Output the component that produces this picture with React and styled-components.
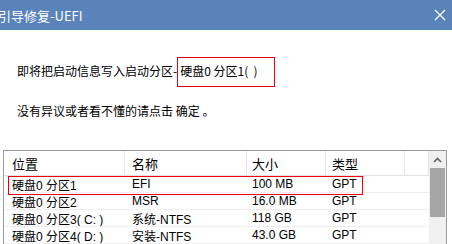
import styled, { createGlobalStyle } from "styled-components";

const GlobalStyle = createGlobalStyle`
  html, body {
    margin: 0;
    padding: 0;
    background: #fff;
  }
  body {
    width: 452px;
    height: 244px;
    overflow: hidden;
    font-family: "Liberation Sans", "Noto Sans CJK SC", sans-serif;
  }
`;

const Window = styled.div`
  width: 452px;
  height: 244px;
  overflow: hidden;
  display: flex;
  flex-direction: column;
`;

const TitleBar = styled.div`
  height: 30px;
  flex: none;
  background: #5a83ba;
  color: #fff;
  display: flex;
  align-items: center;
  justify-content: space-between;
  padding-right: 5px;
`;

const Title = styled.div`
  font-size: 13px;
  margin-left: -2px;
  font-family: "Noto Sans CJK SC", sans-serif;
`;

const CloseButton = styled.div`
  width: 12px;
  height: 12px;
  display: flex;
  margin-right: 1px;
`;

const Message = styled.div`
  padding-left: 17px;
  font-size: 12px;
  color: #000;
  font-family: "Noto Sans CJK SC", sans-serif;
  display: flex;
  flex-direction: column;
`;

const Line = styled.div`
  display: flex;
  align-items: center;
  height: ${(p) => p.$h}px;
  margin-top: ${(p) => p.$mt}px;
  white-space: pre;
`;

const Lead = styled.span`
  margin-bottom: 4px;
`;

const Highlight = styled.span`
  display: inline-flex;
  align-items: center;
  height: 30px;
  box-sizing: border-box;
  width: 98px;
  border: 1px solid #e8000b;
  padding: 0 0 4px 2px;
`;

const TablePanel = styled.div`
  margin: 30px 0 0 3px;
  width: 444px;
  flex: 1;
  box-sizing: border-box;
  border: 1px solid #9a9a9a;
  border-bottom: none;
  display: flex;
  overflow: hidden;
`;

const ListArea = styled.div`
  position: relative;
  width: 425px;
  font-size: 12px;
  font-family: "Liberation Sans", "Noto Sans CJK SC", sans-serif;
`;

const GridRow = styled.div`
  display: grid;
  grid-template-columns: 121px 122px 79px 79px 24px;
  height: ${(p) => (p.$header ? 24 : 16)}px;
  border-bottom: 1px solid ${(p) => (p.$header ? "#e3e3e3" : "#efefef")};
  font-size: ${(p) => (p.$header ? 13 : 12)}px;
`;

const Cell = styled.div`
  display: flex;
  align-items: center;
  padding-left: ${(p) => p.$pl ?? 7}px;
  border-right: ${(p) => (p.$sep ? "1px solid #e5e5e5" : "none")};
  white-space: pre;
  color: #000;
  overflow: hidden;
`;

const Mark = styled.div`
  position: absolute;
  left: 4px;
  top: 25px;
  width: 355px;
  height: 19px;
  box-sizing: border-box;
  border: 1px solid #e8000b;
  pointer-events: none;
`;

const Scrollbar = styled.div`
  width: 17px;
  background: #f0f0f0;
  display: flex;
  flex-direction: column;
`;

const ArrowButton = styled.div`
  height: 17px;
  display: flex;
  align-items: center;
  justify-content: center;
`;

const Thumb = styled.div`
  height: 49px;
  margin: 0 1px;
  background: #a6a6a6;
`;

const columns = ["位置", "名称", "大小", "类型"];

const rows = [
  ["硬盘0 分区1", "EFI", "100 MB", "GPT"],
  ["硬盘0 分区2", "MSR", "16.0 MB", "GPT"],
  ["硬盘0 分区3( C: )", "系统-NTFS", "118 GB", "GPT"],
  ["硬盘0 分区4( D: )", "安装-NTFS", "43.0 GB", "GPT"],
];

const pads = [8, 7, 5, 6];

export default function App() {
  return (
    <Window>
      <GlobalStyle />
      <TitleBar>
        <Title>引导修复-UEFI</Title>
        <CloseButton>
          <svg width="12" height="12" viewBox="0 0 12 12">
            <path d="M1 1 L11 11 M11 1 L1 11" stroke="#fff" strokeWidth="1.3" />
          </svg>
        </CloseButton>
      </TitleBar>
      <Message>
        <Line $h={30} $mt={27}>
          <Lead>即将把启动信息写入启动分区-</Lead>
          <Highlight>硬盘0 分区1(  )</Highlight>
        </Line>
        <Line $h={20} $mt={13}>
          没有异议或者看不懂的请点击 确定 。
        </Line>
      </Message>
      <TablePanel>
        <ListArea>
          <GridRow $header>
            {columns.map((c, i) => (
              <Cell key={c} $pl={pads[i]} $sep>
                {c}
              </Cell>
            ))}
            <Cell $sep />
          </GridRow>
          {rows.map((r) => (
            <GridRow key={r[0]}>
              {r.map((v, i) => (
                <Cell key={i} $pl={pads[i]}>
                  {v}
                </Cell>
              ))}
              <Cell />
            </GridRow>
          ))}
          <Mark />
        </ListArea>
        <Scrollbar>
          <ArrowButton>
            <svg width="9" height="6" viewBox="0 0 9 6">
              <path d="M1 5 L4.5 1.5 L8 5" fill="none" stroke="#606060" strokeWidth="1.6" />
            </svg>
          </ArrowButton>
          <Thumb />
        </Scrollbar>
      </TablePanel>
    </Window>
  );
}
